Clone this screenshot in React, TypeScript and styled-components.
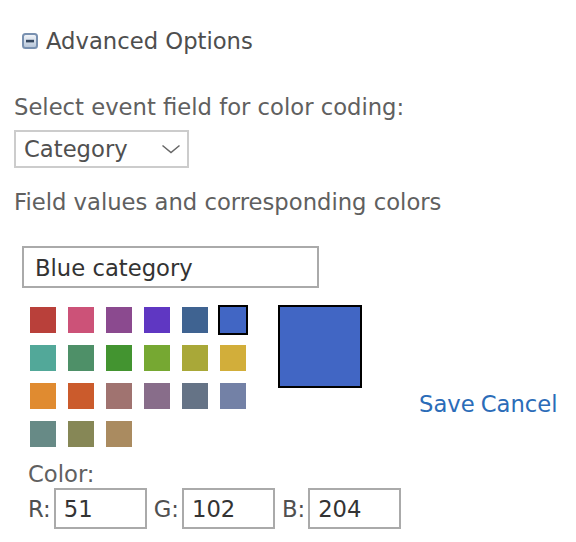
import React, { useState } from "react";
import styled, { createGlobalStyle } from "styled-components";

const GlobalStyle = createGlobalStyle`
  body {
    margin: 0;
    background: #ffffff;
    font-family: "DejaVu Sans", Verdana, sans-serif;
  }
`;

const PALETTE = [
  "#b9403a", "#cc5278", "#8b4a8f", "#5f37c2", "#3f6391", "#4166c4",
  "#52a899", "#4e9068", "#439430", "#76a832", "#a9a838", "#d2ae3a",
  "#e08b30", "#cb5b2c", "#a07370", "#886d8a", "#657386", "#7381a6",
  "#678a86", "#868756", "#aa8b60",
];

const Page = styled.div`
  padding: 27px 14px 0 14px;
  font-size: 22.7px;
  line-height: 28px;
  color: #606060;
`;

const Header = styled.div`
  display: flex;
  align-items: center;
  height: 28px;
  color: #4e4e4e;
`;

const ToggleIcon = styled.svg`
  width: 16px;
  height: 16px;
  margin: 0 8px 0 8px;
  flex: none;
`;

const Label = styled.div`
  margin-top: ${(p: { $top: number }) => p.$top}px;
  height: 28px;
  white-space: nowrap;
`;

const SelectBox = styled.div`
  margin-top: 9px;
  box-sizing: border-box;
  width: 175px;
  height: 38px;
  border: 2px solid #cccccc;
  display: flex;
  align-items: center;
  justify-content: space-between;
  padding: 0 6px 0 8px;
  line-height: 34px;
  color: #505050;
`;

const Editor = styled.div`
  padding-left: 8px;
`;

const NameInput = styled.input`
  margin-top: 30px;
  box-sizing: border-box;
  display: block;
  width: 297px;
  height: 42px;
  border: 2px solid #aaaaaa;
  padding: 2px 0 0 11px;
  font-family: inherit;
  font-size: 22.7px;
  color: #333;
  outline: none;
`;

const PaletteRow = styled.div`
  margin-top: 17px;
  display: flex;
  align-items: flex-start;
`;

const SwatchGrid = styled.div`
  margin: 2px 0 0 8px;
  display: grid;
  grid-template-columns: repeat(6, 26px);
  grid-auto-rows: 26px;
  gap: 12px;
`;

const Swatch = styled.div<{ $color: string; $selected: boolean }>`
  background: ${(p) => p.$color};
  outline: ${(p) => (p.$selected ? "2px solid #000" : "none")};
  cursor: pointer;
`;

const Preview = styled.div<{ $color: string }>`
  margin-left: 32px;
  box-sizing: border-box;
  width: 84px;
  height: 83px;
  border: 2px solid #000;
  background: ${(p) => p.$color};
`;

const Actions = styled.div`
  margin: 85px 0 0 57px;
  display: flex;
  gap: 6px;
`;

const ActionLink = styled.a`
  color: #2b6cb8;
  text-decoration: none;
  cursor: pointer;
`;

const ColorSection = styled.div`
  padding-left: 6px;
`;

const RgbRow = styled.div`
  display: flex;
  align-items: center;
  height: 41px;
  color: #505050;
`;

const Channel = styled.label`
  display: flex;
  align-items: center;
  margin-right: 7px;
`;

const ChannelInput = styled.input`
  box-sizing: border-box;
  width: 93px;
  height: 41px;
  margin-left: 3px;
  border: 2px solid #aaaaaa;
  padding: 0 0 0 8px;
  font-family: inherit;
  font-size: 22.7px;
  color: #333;
  outline: none;
`;

export default function App() {
  const [selected, setSelected] = useState(5);
  const [name, setName] = useState("Blue category");

  return (
    <>
      <GlobalStyle />
      <Page>
        <Header>
          <ToggleIcon viewBox="0 0 16 16">
            <defs>
              <linearGradient id="tg" x1="0" y1="0" x2="0" y2="1">
                <stop offset="0" stopColor="#f4f7fb" />
                <stop offset="1" stopColor="#b3c3d8" />
              </linearGradient>
            </defs>
            <rect x="1" y="1" width="14" height="14" rx="2.5" fill="url(#tg)" stroke="#7890b0" strokeWidth="2" />
            <rect x="4" y="6.8" width="8" height="2.6" fill="#33455e" />
          </ToggleIcon>
          Advanced Options
        </Header>

        <Label $top={38}>Select event field for color coding:</Label>
        <SelectBox>
          <span>Category</span>
          <svg width="20" height="10" viewBox="0 0 20 10">
            <polyline points="1.5,1.5 10,8.5 18.5,1.5" fill="none" stroke="#666" strokeWidth="1.5" />
          </svg>
        </SelectBox>

        <Label $top={20}>Field values and corresponding colors</Label>

        <Editor>
          <NameInput value={name} onChange={(e) => setName(e.target.value)} />
          <PaletteRow>
            <SwatchGrid>
              {PALETTE.map((c, i) => (
                <Swatch key={c} $color={c} $selected={i === selected} onClick={() => setSelected(i)} />
              ))}
            </SwatchGrid>
            <Preview $color={PALETTE[selected]} />
            <Actions>
              <ActionLink>Save</ActionLink>
              <ActionLink>Cancel</ActionLink>
            </Actions>
          </PaletteRow>

          <ColorSection>
            <Label $top={13}>Color:</Label>
            <RgbRow>
              <Channel>
                R:<ChannelInput defaultValue="51" />
              </Channel>
              <Channel>
                G:<ChannelInput defaultValue="102" />
              </Channel>
              <Channel>
                B:<ChannelInput defaultValue="204" />
              </Channel>
            </RgbRow>
          </ColorSection>
        </Editor>
      </Page>
    </>
  );
}
